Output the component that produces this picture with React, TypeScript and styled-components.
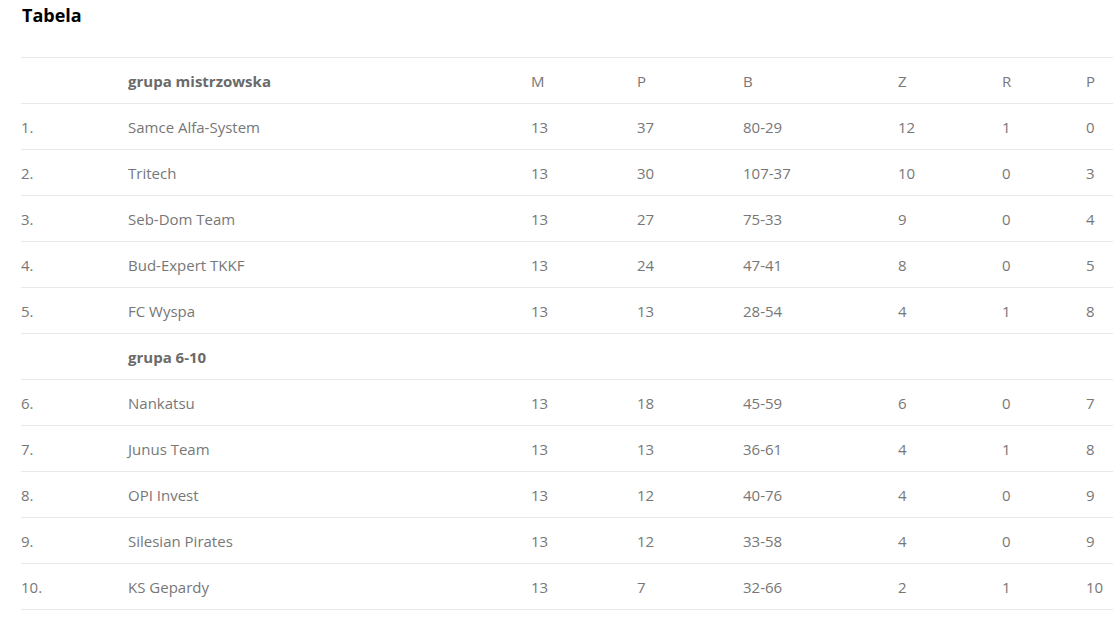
import React from 'react';
import styled, { createGlobalStyle } from 'styled-components';

const GlobalStyle = createGlobalStyle`
  html, body { margin: 0; padding: 0; background: #fff; }
  body { font-family: "Open Sans", "Liberation Sans", sans-serif; overflow: hidden; }
`;

type Team = { pos: string; name: string; m: number; p: number; b: string; z: number; r: number; l: number };

const groups: { title: string; teams: Team[] }[] = [
    {
        title: 'grupa mistrzowska',
        teams: [
            { pos: '1.', name: 'Samce Alfa-System', m: 13, p: 37, b: '80-29', z: 12, r: 1, l: 0 },
            { pos: '2.', name: 'Tritech', m: 13, p: 30, b: '107-37', z: 10, r: 0, l: 3 },
            { pos: '3.', name: 'Seb-Dom Team', m: 13, p: 27, b: '75-33', z: 9, r: 0, l: 4 },
            { pos: '4.', name: 'Bud-Expert TKKF', m: 13, p: 24, b: '47-41', z: 8, r: 0, l: 5 },
            { pos: '5.', name: 'FC Wyspa', m: 13, p: 13, b: '28-54', z: 4, r: 1, l: 8 },
        ],
    },
    {
        title: 'grupa 6-10',
        teams: [
            { pos: '6.', name: 'Nankatsu', m: 13, p: 18, b: '45-59', z: 6, r: 0, l: 7 },
            { pos: '7.', name: 'Junus Team', m: 13, p: 13, b: '36-61', z: 4, r: 1, l: 8 },
            { pos: '8.', name: 'OPI Invest', m: 13, p: 12, b: '40-76', z: 4, r: 0, l: 9 },
            { pos: '9.', name: 'Silesian Pirates', m: 13, p: 12, b: '33-58', z: 4, r: 0, l: 9 },
            { pos: '10.', name: 'KS Gepardy', m: 13, p: 7, b: '32-66', z: 2, r: 1, l: 10 },
        ],
    },
];

const Page = styled.div`
  padding: 0 0 0 21px;
`;

const Title = styled.h2`
  margin: 0;
  padding: 3px 0 0 1px;
  height: 54px;
  font-size: 18px;
  font-weight: 700;
  color: #000;
  line-height: 24px;
`;

const Table = styled.div`
  width: 1092px;
  border-top: 1px solid #e9e9e9;
`;

const Row = styled.div`
  display: grid;
  grid-template-columns: 107px 403px 106px 106px 155px 104px 84px 27px;
  height: 45px;
  align-items: center;
  border-bottom: 1px solid #e9e9e9;
  font-size: 15px;
  color: #777;
`;

const Cell = styled.div<{ $bold?: boolean }>`
  white-space: nowrap;
  font-weight: ${(p) => (p.$bold ? 700 : 400)};
  color: ${(p) => (p.$bold ? '#6a6a6a' : '#777')};
`;

const App = () => (
    <Page>
        <GlobalStyle />
        <Title>Tabela</Title>
        <Table>
            {groups.map((g, gi) => (
                <React.Fragment key={g.title}>
                    <Row>
                        <Cell />
                        <Cell $bold>{g.title}</Cell>
                        {gi === 0 ? (
                            <>
                                <Cell>M</Cell>
                                <Cell>P</Cell>
                                <Cell>B</Cell>
                                <Cell>Z</Cell>
                                <Cell>R</Cell>
                                <Cell>P</Cell>
                            </>
                        ) : null}
                    </Row>
                    {g.teams.map((t) => (
                        <Row key={t.pos}>
                            <Cell>{t.pos}</Cell>
                            <Cell>{t.name}</Cell>
                            <Cell>{t.m}</Cell>
                            <Cell>{t.p}</Cell>
                            <Cell>{t.b}</Cell>
                            <Cell>{t.z}</Cell>
                            <Cell>{t.r}</Cell>
                            <Cell>{t.l}</Cell>
                        </Row>
                    ))}
                </React.Fragment>
            ))}
        </Table>
    </Page>
);

export default App;
